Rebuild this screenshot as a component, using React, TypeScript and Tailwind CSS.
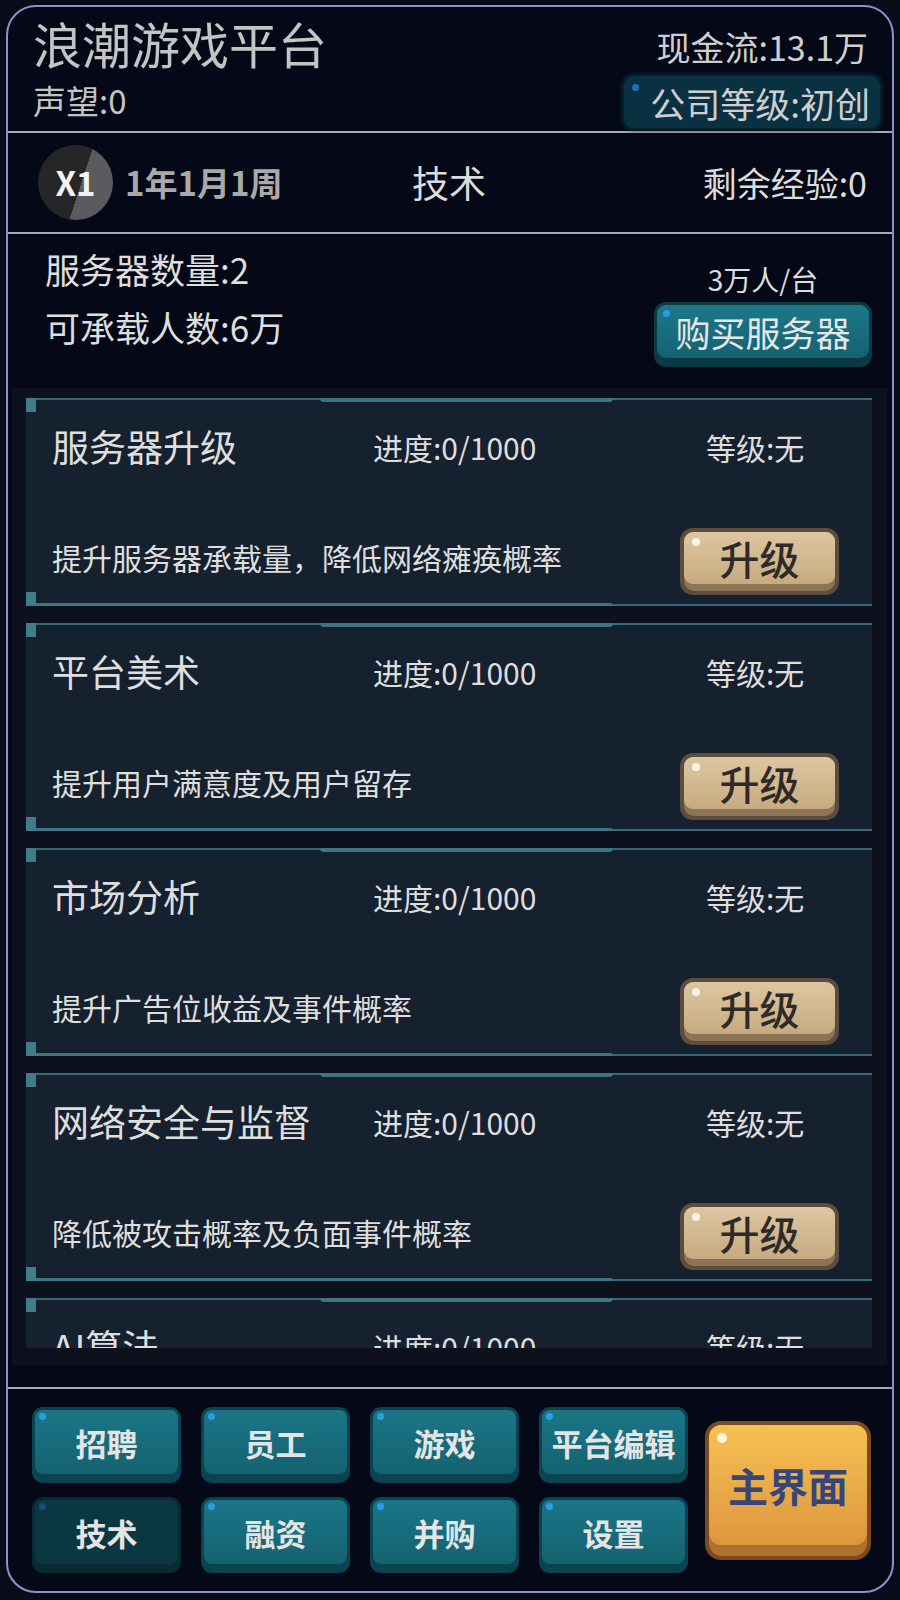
import React from 'react';

const techs = [
    { name: '服务器升级', desc: '提升服务器承载量，降低网络瘫痪概率' },
    { name: '平台美术', desc: '提升用户满意度及用户留存' },
    { name: '市场分析', desc: '提升广告位收益及事件概率' },
    { name: '网络安全与监督', desc: '降低被攻击概率及负面事件概率' },
    { name: 'AI算法', desc: '提升游戏推荐精准度' },
];

const TealButton = ({ label, active = false }: { label: string; active?: boolean }) => (
    <div
        className={`relative h-[76px] w-[149px] rounded-[11px] p-[3px] pb-[9px] ${
            active ? 'bg-[#082a33]' : 'bg-[#0c4351]'
        }`}
    >
        <div
            className={`flex h-full items-center justify-center rounded-[8px] text-[31px] font-bold leading-none text-[#e4e4e4] ${
                active ? 'bg-[#0b3742]' : 'bg-gradient-to-b from-[#1b7687] to-[#14626f]'
            }`}
        >
            {label}
        </div>
        <span
            className={`absolute left-[7px] top-[6px] h-[7px] w-[7px] rounded-full ${
                active ? 'bg-[#12507a]' : 'bg-[#2a9de6]'
            }`}
        />
    </div>
);

const UpgradeButton = () => (
    <div className="relative h-[67px] w-[159px] shrink-0 rounded-[13px] bg-[#5e4c3c] p-[4px]">
        <div className="h-full rounded-[10px] bg-[#8e7457] pb-[7px]">
            <div className="flex h-full items-center justify-center rounded-[9px] bg-gradient-to-b from-[#dcc7a2] to-[#c8aa80] text-[40px] font-medium leading-none text-[#2d2a27]">
                升级
            </div>
        </div>
        <span className="absolute left-[12px] top-[10px] h-[8px] w-[8px] rounded-full bg-[#fbf4e4]" />
    </div>
);

const TechCard = ({ name, desc }: { name: string; desc: string }) => (
    <div className="relative flex h-[208px] shrink-0 flex-col justify-between bg-[#162130] pb-[11px] pl-[26px] pr-[33px] pt-[17px]">
        {/* frame trims */}
        <div className="absolute left-0 right-0 top-0 h-[2px] bg-[#35687a]" />
        <div className="absolute left-[294px] top-0 h-[4px] w-[293px] rounded-b-[4px] bg-[#3c7684]" />
        <div className="absolute left-0 top-0 h-[14px] w-[10px] bg-[#3f7d8a]" />
        <div className="absolute bottom-0 left-0 right-0 h-[2px] bg-[#35687a]" />
        <div className="absolute bottom-0 left-0 h-[3px] w-[587px] rounded-tr-[4px] bg-[#3c7684]" />
        <div className="absolute bottom-0 left-0 h-[14px] w-[10px] bg-[#3f7d8a]" />

        <div className="flex h-[64px] items-center text-[#dedede]">
            <div className="w-[321px] text-[37px]">{name}</div>
            <div className="w-[333px] text-[30px]">进度:0/1000</div>
            <div className="text-[30px]">等级:无</div>
        </div>
        <div className="flex h-[67px] items-center justify-between">
            <div className="mb-[9px] text-[30px] leading-[40px] text-[#dedede]">{desc}</div>
            <UpgradeButton />
        </div>
    </div>
);

export default function App() {
    return (
        <div className="h-[1600px] w-[900px] bg-[#090b1a] px-[6px] pb-[7px] pt-[5px] font-['Noto_Sans_CJK_SC','Noto_Sans',sans-serif]">
            <div className="flex h-full flex-col overflow-hidden rounded-[30px] border-2 border-[#8d92c6] bg-[#050816]">
                {/* header */}
                <div className="flex h-[124px] shrink-0 justify-between pl-[25px] pr-[12px]">
                    <div className="flex flex-col pt-[8px]">
                        <div className="text-[49px] leading-[56px] text-[#c4c4c4]">浪潮游戏平台</div>
                        <div className="mt-[10px] text-[33px] leading-[38px] text-[#c4c4c4]">声望:0</div>
                    </div>
                    <div className="flex flex-col items-end pt-[20px]">
                        <div className="pr-[12px] text-[34px] leading-[40px] text-[#cfcfcf]">现金流:13.1万</div>
                        <div className="relative mt-[9px] flex h-[52px] items-center rounded-[10px] bg-[#0a3142] pl-[26px] pr-[10px] shadow-[0_0_4px_2px_#0a2a38]">
                            <span className="absolute left-[8px] top-[8px] h-[7px] w-[7px] rounded-full bg-[#1b6fb8]" />
                            <span className="text-[35px] leading-none text-[#cfcfcf]">公司等级:初创</span>
                        </div>
                    </div>
                </div>
                <div className="h-[2px] shrink-0 bg-[#a9a9b0]" />

                {/* date / tab row */}
                <div className="flex h-[99px] shrink-0 items-center pl-[30px] pr-[25px]">
                    <div className="flex h-[75px] w-[75px] items-center justify-center rounded-full bg-[linear-gradient(108deg,#262628_56%,#5b5b5f_56%)] text-[33px] font-bold text-[#f2f2f2]">
                        X1
                    </div>
                    <div className="ml-[12px] w-[287px] text-[33px] font-semibold text-[#a9a9a9]">1年1月1周</div>
                    <div className="text-[37px] text-[#dcdcdc]">技术</div>
                    <div className="ml-auto text-[34px] text-[#dcdcdc]">剩余经验:0</div>
                </div>
                <div className="h-[2px] shrink-0 bg-[#a9a9b0]" />

                {/* servers */}
                <div className="flex h-[154px] shrink-0 justify-between pl-[37px] pr-[20px]">
                    <div className="flex flex-col pt-[14px] text-[35px] text-[#dedede]">
                        <div className="leading-[42px]">服务器数量:2</div>
                        <div className="mt-[16px] leading-[42px]">可承载人数:6万</div>
                    </div>
                    <div className="flex flex-col items-center pt-[28px]">
                        <div className="text-[28px] leading-[34px] text-[#dedede]">3万人/台</div>
                        <div className="relative mt-[6px] h-[65px] w-[218px] rounded-[12px] bg-[#0b3a45] p-[3px] pb-[9px]">
                            <div className="flex h-full items-center justify-center rounded-[9px] bg-gradient-to-b from-[#1c7888] to-[#146272] text-[35px] leading-none text-[#e6e6e6]">
                                购买服务器
                            </div>
                            <span className="absolute left-[9px] top-[8px] h-[7px] w-[7px] rounded-full bg-[#2a9de6]" />
                        </div>
                    </div>
                </div>

                {/* tech list */}
                <div className="ml-[4px] mr-[5px] h-[977px] shrink-0 bg-[#0d111d] pb-[17px] pl-[14px] pr-[15px] pt-[10px]">
                    <div className="flex h-full flex-col gap-[17px] overflow-hidden">
                        {techs.map((t) => (
                            <TechCard key={t.name} name={t.name} desc={t.desc} />
                        ))}
                    </div>
                </div>

                <div className="h-[22px] shrink-0" />
                <div className="h-[2px] shrink-0 bg-[#a9a9b0]" />

                {/* bottom nav */}
                <div className="flex flex-1 items-center pl-[24px]">
                    <div className="grid grid-cols-[149px_149px_149px_149px] gap-x-[20px] gap-y-[14px]">
                        <TealButton label="招聘" />
                        <TealButton label="员工" />
                        <TealButton label="游戏" />
                        <TealButton label="平台编辑" />
                        <TealButton label="技术" active />
                        <TealButton label="融资" />
                        <TealButton label="并购" />
                        <TealButton label="设置" />
                    </div>
                    <div className="relative ml-[17px] h-[139px] w-[166px] rounded-[16px] bg-[#7a4a22] p-[4px]">
                        <div className="h-full rounded-[13px] bg-[#b0712f] pb-[11px]">
                            <div className="flex h-full items-center justify-center rounded-[12px] bg-gradient-to-b from-[#f7c152] to-[#dd963f] text-[40px] font-bold leading-none text-[#37467a]">
                                主界面
                            </div>
                        </div>
                        <span className="absolute left-[12px] top-[12px] h-[10px] w-[10px] rounded-full bg-[#fff7e0]" />
                    </div>
                </div>
            </div>
        </div>
    );
}
